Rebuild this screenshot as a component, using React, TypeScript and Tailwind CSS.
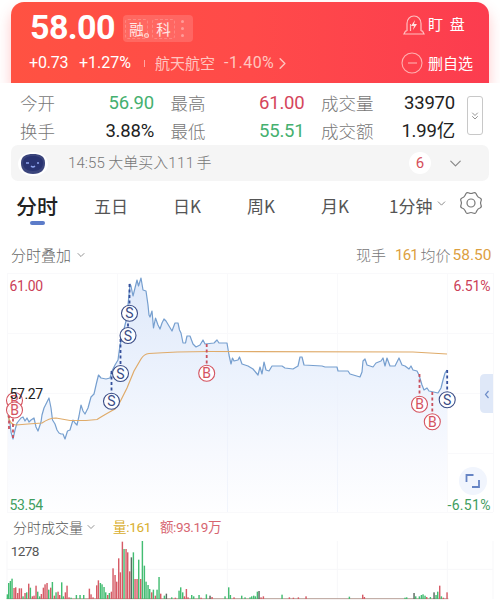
import React from "react"
import { ChevronDown, ChevronRight, ChevronsDown } from "lucide-react"

type Bar = [number, number, string]
type Trade = { kind: "S" | "B"; x: number; y: number; from?: number; lineX?: number }

const stats = [
    { label: "今开", value: "56.90", color: "text-[#45b06f]" },
    { label: "最高", value: "61.00", color: "text-[#d5455b]" },
    { label: "成交量", value: "33970", color: "text-[#222]" },
    { label: "换手", value: "3.88%", color: "text-[#222]" },
    { label: "最低", value: "55.51", color: "text-[#45b06f]" },
    { label: "成交额", value: "1.99亿", color: "text-[#222]" },
]

const tabs = [
    { title: "五日", width: "w-[79px]" },
    { title: "日K", width: "w-[74px]" },
    { title: "周K", width: "w-[74px]" },
    { title: "月K", width: "w-[68px]" },
]

const price =
    "8,415 10,423 11,432 13,439 15,430 17,423 21,418 23,417 25,421 27,418 29,422 31,420 34,418 36,427 38,431 41,422 42,415 44,408 47,402 49,398 51,408 52.5,420 55,424 57,430 59,433 61,434 63,434 65,439 67.5,431 70,430 73,420 75,423 77,425 79,416 81,405 83,411 85,414 88,408 91,397 94,394 96.5,383 98.5,375 101,378 106,379 110,378 112,371 115,365 118,360 120,345 123,333 126,321 128,305 130,284 131,286 133,296 135,288 137,280 138.5,286 141,278 143,290 146,291 148,305 149,315 150,317 152,311 153.5,328 155.5,318 158,325 160,329 162,323 164,319 166,321 169,326 172,331 175,323 178,323 179.5,330 181,333 183,343 185.5,343 187,336 190,336 193,344 196,347 200,345 203,340 205,344 214,343 217,340 219,343 227,343 229,355 231,364 232.5,358 234,361 238,360 239.5,357 242,364 248,366 253,369 258,375 260,367 262,374 264,362 266,370 269,371 272,366 282,366 285,368 293,369 298,366 300,357 302,357 304,365 322,366 325,367 337,367 338,371 348,371 350,374 360,377 362,372 363,361 365,359 367,365 373,367 376,363 381,361 383,358 385,366 387,358 390,366 395,366 399,358 402,365 405,366 409,369 411,366 413,370 417,371 419,375 422,385 424,390 427,388 429,391 438,393 441,388 443,380 445,373 447,370"

const average =
    "M8 416 Q10 425 16 425 L28 424 42 423 Q49 418 56 418 L70 420.5 86 420.5 97 419.5 Q104 415 115 409 L120 402 127 388 134 371 141 359 Q144 354 149 353.5 Q175 351.5 210 351.5 L413 352 447 354"

const trades: Trade[] = [
    { kind: "B", x: 14.5, y: 400.5, lineX: 9, from: 429 },
    { kind: "B", x: 14.5, y: 410, lineX: 13, from: 438 },
    { kind: "S", x: 111.5, y: 401.3, from: 371 },
    { kind: "S", x: 120.5, y: 373.5, from: 339 },
    { kind: "S", x: 128, y: 335.5, from: 318 },
    { kind: "S", x: 129.5, y: 313.3, from: 284 },
    { kind: "B", x: 206.7, y: 373.3, from: 344 },
    { kind: "B", x: 419.5, y: 404.3, from: 374 },
    { kind: "B", x: 432.3, y: 421.7, from: 392 },
    { kind: "S", x: 447.2, y: 399.7, from: 370 },
]

// x, height and side of every bar, on a grid three times finer than the page
const bars: Bar[] = [
    [22, 14, "g"], [26, 48, "g"], [31, 54, "g"], [36, 61, "g"], [42, 33, "r"], [47, 35, "r"], [53, 18, "r"], [58, 32, "r"],
    [64, 32, "r"], [69, 8, "g"], [75, 18, "r"], [80, 20, "g"], [86, 46, "r"], [91, 34, "g"], [97, 8, "r"], [102, 10, "r"],
    [108, 40, "r"], [113, 22, "g"], [119, 8, "g"], [124, 15, "r"], [130, 34, "r"], [135, 44, "r"], [141, 48, "r"], [146, 28, "g"],
    [152, 34, "r"], [157, 51, "g"], [163, 10, "r"], [168, 20, "g"], [174, 22, "r"], [179, 12, "r"], [185, 50, "g"], [190, 8, "g"],
    [196, 20, "r"], [201, 40, "r"], [207, 5, "r"], [213, 4, "g"], [229, 12, "g"], [240, 12, "g"], [251, 12, "g"], [268, 31, "r"],
    [273, 14, "r"], [279, 5, "r"], [290, 41, "r"], [295, 56, "r"], [301, 48, "g"], [306, 44, "g"], [312, 36, "g"], [317, 20, "g"],
    [323, 12, "r"], [328, 18, "g"], [334, 22, "r"], [339, 92, "r"], [345, 72, "r"], [350, 52, "r"], [356, 122, "r"], [361, 80, "r"],
    [367, 172, "r"], [372, 150, "g"], [378, 150, "r"], [383, 140, "r"], [389, 83, "r"], [394, 125, "d"], [400, 140, "g"], [405, 60, "r"],
    [411, 60, "r"], [416, 118, "g"], [422, 60, "r"], [427, 174, "g"], [433, 100, "g"], [438, 52, "g"], [444, 42, "g"], [449, 30, "g"],
    [455, 20, "r"], [460, 28, "g"], [466, 10, "r"], [471, 28, "g"], [477, 66, "g"], [482, 16, "r"], [493, 10, "g"], [499, 16, "d"],
    [515, 5, "g"], [526, 4, "r"], [537, 25, "g"], [542, 35, "g"], [548, 20, "g"], [553, 8, "r"], [559, 30, "r"], [564, 5, "r"],
    [575, 12, "g"], [581, 8, "g"], [597, 12, "g"], [603, 4, "r"], [619, 14, "g"], [630, 10, "d"], [636, 6, "r"], [675, 8, "g"],
    [686, 35, "g"], [691, 12, "g"], [702, 5, "r"], [725, 10, "g"], [735, 5, "g"], [750, 5, "g"], [755, 8, "g"], [761, 10, "g"],
    [766, 8, "g"], [772, 22, "g"], [777, 24, "d"], [783, 5, "r"], [790, 8, "r"], [846, 13, "g"], [868, 5, "r"], [880, 4, "r"],
    [895, 5, "r"], [918, 8, "r"], [1048, 7, "g"], [1088, 13, "r"], [1093, 6, "r"], [1215, 4, "g"], [1220, 5, "g"], [1242, 18, "d"],
    [1247, 8, "g"], [1258, 8, "g"], [1264, 12, "g"], [1269, 14, "g"], [1275, 10, "g"], [1280, 6, "r"], [1291, 6, "g"], [1302, 20, "d"],
    [1308, 12, "g"], [1313, 22, "g"], [1319, 40, "r"], [1324, 8, "g"], [1330, 4, "r"], [1341, 20, "r"],
]

const barColors: Record<string, string> = { g: "#43bd72", r: "#d65b66", d: "#596b60" }

const Tag = ({ children }: { children: React.ReactNode }) => (
    <span className="flex h-[20px] w-[23px] items-center justify-center rounded-[3px] border border-dashed border-white/20 text-[14.500px] text-white/85">
        {children}
    </span>
)

const Header = () => (
    <div className="relative mx-[11px] h-[81px] rounded-t-[13px] bg-linear-to-r from-[#ff5242] via-[#ff4a49] to-[#fc3c4f] text-white shadow-[0_8px_14px_rgba(255,75,80,0.3)]">
        <div className="flex h-[50px] items-center pb-px pl-[19px]">
            <span className="w-[93px] pt-[2px] font-[Roboto] text-[34px] font-bold tracking-[-0.6px]">58.00</span>
            <div className="relative mt-[4px] flex h-[27px] w-[70px] items-center gap-[4px] rounded-[4px] bg-white/15 pl-[2px]">
                <Tag>融</Tag>
                <Tag>科</Tag>
                <span className="flex flex-col gap-[4px] pl-[2px]">
                    <i className="size-[3px] rounded-full bg-white/35" />
                    <i className="size-[3px] rounded-full bg-white/35" />
                    <i className="size-[3px] rounded-full bg-white/35" />
                </span>
                <i className="absolute top-[18px] left-[21px] size-[5px] rounded-full border border-white/60 bg-[#ff8b80]" />
            </div>
            <svg className="mb-[3px] ml-[210px]" width="22" height="20" viewBox="0 0 22 20" fill="none" stroke="#ffc0c0" strokeWidth="1.2">
                <path d="M4 16V8.5C4 4 7 1 11 1s7 3 7 7.500V16M4 16H2.500L1 19h20l-1.500-3H18M7.500 16V9" />
                <path d="m12 5-4 6h3l-1 4 4-6h-3z" fill="#ffe2df" stroke="none" />
            </svg>
            <span className="mb-[4px] ml-[3px] w-[50px] text-[15px] whitespace-pre">盯&nbsp;&nbsp;盘</span>
        </div>
        <div className="flex h-[22px] items-center pl-[18px] text-[15px]">
            <span className="w-[50px] font-[Roboto] text-[16px] tracking-[-0.2px]">+0.73</span>
            <span className="w-[65px] font-[Roboto] text-[16px]">+1.27%</span>
            <i className="h-[7px] w-px bg-white/50" />
            <span className="ml-[10px] w-[69px] text-[#ffc5bf]">航天航空</span>
            <span className="w-[54px] font-[Roboto] text-[16px] tracking-[0.5px] text-[#ffc5bf]">-1.40%</span>
            <ChevronRight className="-ml-[5px] size-[19px] text-[#ffc5bf]" strokeWidth={1.8} />
            <svg className="ml-[109px]" width="22" height="22" viewBox="0 0 22 22" fill="none" stroke="#ffb0b0" strokeWidth="1.1">
                <circle cx="11" cy="11" r="10" />
                <path d="M7 11h9" />
            </svg>
            <span className="ml-[5px] whitespace-nowrap">删自选</span>
        </div>
    </div>
)

const Stats = () => (
    <div className="relative z-10 flex h-[62px] bg-white pt-[6px] pl-[20px]">
        <div className="grid h-[56px] w-[435px] grid-cols-[134px_134px_134px] gap-x-[16.500px]">
            {stats.map((item) => (
                <div key={item.label} className="flex h-[28px] items-center justify-between">
                    <span className="text-[17.500px] font-light text-[#777]">{item.label}</span>
                    <span className={`pt-[2px] font-[Roboto,'Noto_Sans_CJK_SC'] text-[18.500px] tracking-[-0.2px] ${item.color}`}>{item.value}</span>
                </div>
            ))}
        </div>
        <div className="mt-[7px] ml-[12px] flex h-[39px] w-[16px] items-center justify-center rounded-[3px] border border-[#c8c8c8]">
            <ChevronsDown className="size-[12px] shrink-0 text-[#888]" strokeWidth={1.8} />
        </div>
    </div>
)

const Ticker = () => (
    <div className="mx-[11px] flex h-[36px] items-center rounded-[7px] bg-[#f5f5f5] pl-[7px]">
        <svg width="30" height="25" viewBox="0 0 30 25">
            <ellipse cx="15" cy="13" rx="15" ry="12" fill="#fff" />
            <path d="M3 12C3 5 8 3 15 3s12 2 12 9-4 11-12 11S3 19 3 12Z" fill="#3b457c" />
            <path d="M5 12c0-5 4-7 10-7s10 2 10 7-4 8-10 8-10-3-10-8Z" fill="#293371" />
            <path d="M8 12h3M19 12h2M13 15q2 2 4 0" stroke="#8fa5ef" strokeWidth="1.300" fill="none" />
        </svg>
        <span className="ml-[20px] w-[341px] text-[15px] font-light text-[#777]">
            <span className="font-[Roboto] tracking-[0.1px]">14:55</span> 大单买入<span className="font-[Roboto] tracking-[0.4px]">111</span><span className="ml-[2px]">手</span>
        </span>
        <span className="flex size-[22px] items-center justify-center rounded-full bg-white font-[Roboto] text-[15px] text-[#d5505b]">6</span>
        <ChevronDown className="ml-[15px] size-[19px] text-[#888]" strokeWidth={1.5} />
    </div>
)

const Tabs = () => (
    <div className="flex h-[58px] pl-[16px] text-[17px] text-[#555]">
        <div className="flex w-[78px] flex-col">
            <span className="mt-[8px] text-[21px] leading-[32px] font-medium text-[#222]">分时</span>
            <i className="ml-[14px] h-[4px] w-[15px] rounded-full bg-[#5c7cc9]" />
        </div>
        {tabs.map((tab) => (
            <span key={tab.title} className={`pt-[10px] leading-[30px] ${tab.width}`}>{tab.title}</span>
        ))}
        <span className="pt-[10px] leading-[30px] whitespace-nowrap">1分钟</span>
        <ChevronDown className="mt-[16px] ml-[3px] size-[13px] text-[#888]" strokeWidth={1.8} />
        <svg className="mt-[10px] ml-[11px]" width="24" height="24" viewBox="0 0 24 24" fill="none" stroke="#777" strokeWidth="1.2">
            <path d="M7 2.500Q8 1 10 2q2 1 4 0 2-1 3 .5l1 2q1 2 3 2.500 2 1 1 3-1 2 0 4 1 2-1 3-2 .5-3 2.500l-1 2q-1 1.500-3 .5-2-1-4 0-2 1-3-.5l-1-2Q5 17.500 3 17q-2-1-1-3 1-2 0-4-1-2 1-3 2-.5 3-2.500Z" />
            <circle cx="12" cy="12" r="4" />
        </svg>
    </div>
)

const ChartLegend = () => (
    <div className="flex h-[32px] items-center pl-[11px] text-[15px] font-light text-[#666]">
        <span>分时叠加</span>
        <ChevronDown className="ml-[4px] size-[12px] text-[#888]" strokeWidth={1.8} />
        <span className="ml-[269px] w-[39px] text-[#777]">现手</span>
        <span className="w-[25.500px] pt-px font-[Roboto] font-normal tracking-[-0.8px] text-[#dda03f]">161</span>
        <span className="w-[32px] text-[#777]">均价</span>
        <span className="pt-[2px] font-[Roboto] text-[15.500px] font-normal text-[#dda03f]">58.50</span>
    </div>
)

const TradeMark = ({ kind, x, y }: Trade) => {
    const color = kind === "S" ? "#3a4c86" : "#d4535f"
    return (
        <g>
            <circle cx={x} cy={y} r="8" fill="#fff" fillOpacity="0.9" stroke={color} strokeWidth="1.1" />
            <text x={x} y={y + 5} textAnchor="middle" fontSize="14" fill={color}>{kind}</text>
        </g>
    )
}

const PriceChart = () => (
    <svg className="block font-[Roboto]" width="500" height="242" viewBox="0 271 500 242">
        <defs>
            <linearGradient id="area" gradientUnits="userSpaceOnUse" x1="0" y1="278" x2="0" y2="512">
                <stop offset="0" stopColor="#dfe9fa" />
                <stop offset="0.45" stopColor="#edf3fd" />
                <stop offset="0.75" stopColor="#f7f9fe" />
                <stop offset="1" stopColor="#fefeff" />
            </linearGradient>
        </defs>
        <path d="M7.500 273V512M117.500 273V512M227.500 273V512M337.500 273V512M447.500 273V512M493.500 273V512M7 273.500H493M7 333.500H493M7 393.500H493M7 453.500H493M7 512.500H493" stroke="#f9f9fb" />
        <polygon points={`8,512 ${price} 447,512`} fill="url(#area)" />
        <path d="M227.500 345V512M337.500 370V512" stroke="#edf1fa" strokeWidth="0.7" />
        <polyline points={price} fill="none" stroke="#769fcf" strokeWidth="1.200" strokeLinejoin="round" />
        <path d={average} fill="none" stroke="#dfab6a" strokeWidth="1.200" />
        {trades.map((t) => (
            <path
                key={`${t.x}-${t.y}`}
                d={`M${t.lineX ?? t.x} ${t.from}V${t.y}`}
                stroke={t.kind === "S" ? "#344f9b" : "#c9505e"}
                strokeWidth="1.800"
                strokeDasharray="3 2.500"
            />
        ))}
        {trades.map((t) => (
            <TradeMark key={`${t.kind}${t.x}-${t.y}`} {...t} />
        ))}
        <g fontSize="14">
            <text x="9.500" y="291" textLength="33.500" fill="#cb4058">61.00</text>
            <text x="9.500" y="399" textLength="33.500" fill="#222">57.27</text>
            <text x="9.500" y="510" textLength="33.500" fill="#3f9d60">53.54</text>
            <text x="490.500" y="291" textAnchor="end" textLength="37" fill="#cb4058">6.51%</text>
            <text x="490.500" y="509.500" textAnchor="end" textLength="43" fill="#3f9d60">-6.51%</text>
        </g>
        <path d="M493 374h-8q-5 0-5 5v29q0 5 5 5h8Z" fill="#dfe8f8" />
        <path d="m488.500 391-3 3.500 3 3.500" fill="none" stroke="#6e8dc8" strokeWidth="1.200" />
        <circle cx="473" cy="481" r="14" fill="#f1f5fd" />
        <path d="M466.500 482v-7h7M479 480v7h-7" fill="none" stroke="#6684c4" strokeWidth="1.800" />
    </svg>
)

const VolumeChart = () => (
    <div className="h-[89px]">
        <div className="flex h-[28px] items-center pl-[13px] text-[14px] font-light text-[#555]">
            <span>分时成交量</span>
            <ChevronDown className="ml-[2px] size-[12px] text-[#888]" strokeWidth={1.8} />
            <span className="ml-[16px] w-[47px] font-[Roboto,'Noto_Sans_CJK_SC'] text-[13.500px] font-normal tracking-[-0.3px] text-[#d9ae2d]">量:161</span>
            <span className="font-[Roboto,'Noto_Sans_CJK_SC'] text-[13.500px] font-normal tracking-[-0.4px] whitespace-nowrap text-[#d76570]">额:93.19万</span>
        </div>
        <svg className="block font-[Roboto]" width="500" height="61" viewBox="0 93 1500 183">
            <path d="M21 93V267M682 93V267M1012 93V267M1342 93V267M1479 93V267M21 178H1479" stroke="#f7f7f9" strokeWidth="3" />
            <path d="M20 266H1345" stroke="#a98d82" strokeWidth="2.500" />
            {bars.map(([x, h, side]) => (
                <rect key={x} x={x - 2} y={267 - h} width="4.300" height={h} fill={barColors[side]} />
            ))}
            <text x="32" y="139" fontSize="41" textLength="86" fill="#555">1278</text>
        </svg>
    </div>
)

export default function App() {
    return (
        <div className="h-[602px] w-[500px] overflow-hidden bg-white pt-[2px] font-['Noto_Sans_CJK_SC',sans-serif]">
            <Header />
            <Stats />
            <Ticker />
            <Tabs />
            <ChartLegend />
            <PriceChart />
            <VolumeChart />
        </div>
    )
}
